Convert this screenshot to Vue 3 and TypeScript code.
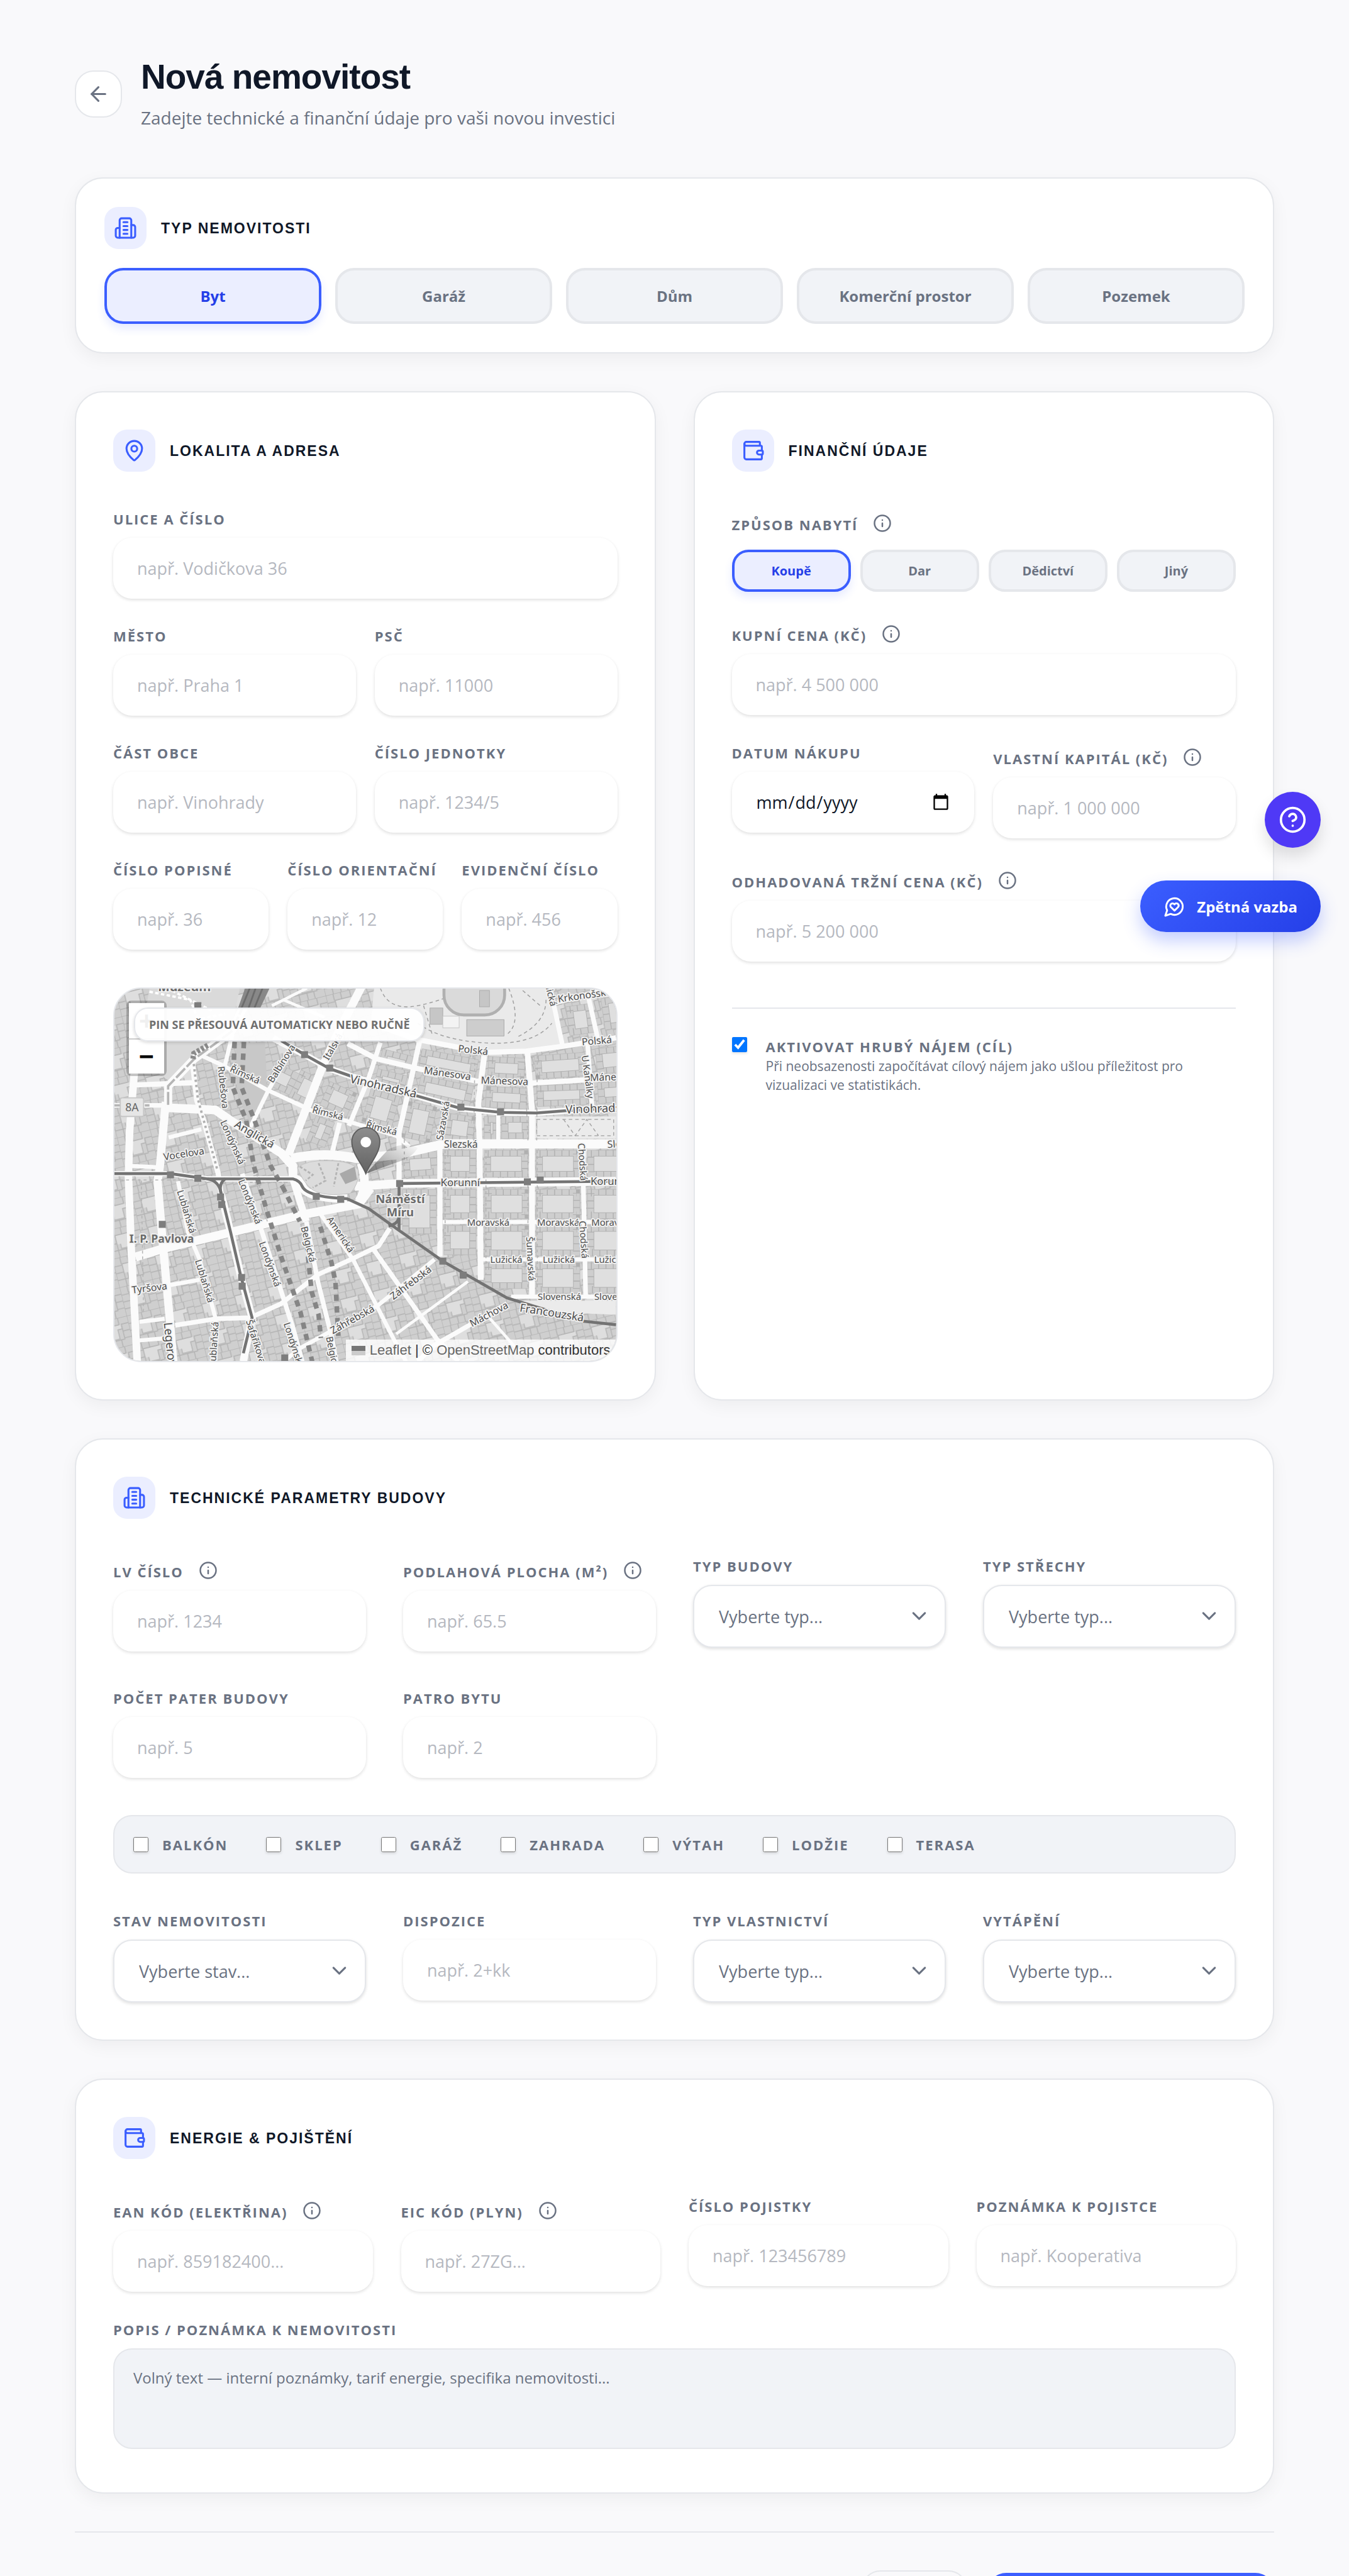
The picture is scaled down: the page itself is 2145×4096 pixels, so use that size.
<script setup lang="ts">
import { h, ref } from 'vue'

interface Field {
  id: string
  label: string
  hint?: string
  info?: boolean
  select?: boolean
}

const iconPaths: Record<string, string[]> = {
  back: ['m12 19-7-7 7-7', 'M19 12H5'],
  building: [
    'M6 22V4a2 2 0 0 1 2-2h8a2 2 0 0 1 2 2v18Z',
    'M6 12H4a2 2 0 0 0-2 2v6a2 2 0 0 0 2 2h2',
    'M18 9h2a2 2 0 0 1 2 2v9a2 2 0 0 1-2 2h-2',
    'M10 6h4',
    'M10 10h4',
    'M10 14h4',
    'M10 18h4',
  ],
  pin: [
    'M20 10c0 4.993-5.539 10.193-7.399 11.799a1 1 0 0 1-1.202 0C9.539 20.193 4 14.993 4 10a8 8 0 0 1 16 0',
    'M15 10a3 3 0 1 1-6 0a3 3 0 0 1 6 0',
  ],
  wallet: [
    'M19 7V4a1 1 0 0 0-1-1H5a2 2 0 0 0 0 4h15a1 1 0 0 1 1 1v4h-3a2 2 0 0 0 0 4h3a1 1 0 0 0 1-1v-2a1 1 0 0 0-1-1',
    'M3 5v14a2 2 0 0 0 2 2h15a1 1 0 0 0 1-1v-4',
  ],
  info: ['M22 12a10 10 0 1 1-20 0a10 10 0 0 1 20 0', 'M12 16v-4', 'M12 8h.01'],
  help: [
    'M22 12a10 10 0 1 1-20 0a10 10 0 0 1 20 0',
    'M9.09 9a3 3 0 0 1 5.83 1c0 2-3 3-3 3',
    'M12 17h.01',
  ],
  chevron: ['m6 9 6 6 6-6'],
  feedback: [
    'M7.9 20A9 9 0 1 0 4 16.1L2 22Z',
    'M15.8 9.2a2.5 2.5 0 0 0-3.5 0l-.3.4-.35-.3a2.42 2.42 0 1 0-3.2 3.6l3.6 3.5 3.6-3.5c1.2-1.2 1.1-2.7.2-3.7',
  ],
}

const Icon = (props: { name: string }) =>
  h(
    'svg',
    {
      viewBox: '0 0 24 24',
      fill: 'none',
      stroke: 'currentColor',
      'stroke-width': 2,
      'stroke-linecap': 'round',
      'stroke-linejoin': 'round',
      'aria-hidden': 'true',
    },
    iconPaths[props.name].map((d) => h('path', { d })),
  )
Icon.props = ['name']

const kinds = ['Byt', 'Garáž', 'Dům', 'Komerční prostor', 'Pozemek']
const kind = ref('Byt')
const acquisitions = ['Koupě', 'Dar', 'Dědictví', 'Jiný']
const acquisition = ref('Koupě')
const rentTarget = ref(true)

const addressRows: Field[][] = [
  [{ id: 'street', label: 'Ulice a číslo', hint: 'např. Vodičkova 36' }],
  [
    { id: 'city', label: 'Město', hint: 'např. Praha 1' },
    { id: 'zip', label: 'PSČ', hint: 'např. 11000' },
  ],
  [
    { id: 'district', label: 'Část obce', hint: 'např. Vinohrady' },
    { id: 'unit', label: 'Číslo jednotky', hint: 'např. 1234/5' },
  ],
  [
    { id: 'houseno', label: 'Číslo popisné', hint: 'např. 36' },
    { id: 'orientno', label: 'Číslo orientační', hint: 'např. 12' },
    { id: 'evidno', label: 'Evidenční číslo', hint: 'např. 456' },
  ],
]

const buildingFields: Field[] = [
  { id: 'lv', label: 'LV číslo', hint: 'např. 1234', info: true },
  { id: 'area', label: 'Podlahová plocha (m²)', hint: 'např. 65.5', info: true },
  { id: 'btype', label: 'Typ budovy', hint: 'Vyberte typ...', select: true },
  { id: 'roof', label: 'Typ střechy', hint: 'Vyberte typ...', select: true },
  { id: 'floors', label: 'Počet pater budovy', hint: 'např. 5' },
  { id: 'floor', label: 'Patro bytu', hint: 'např. 2' },
]
const amenities = ['Balkón', 'Sklep', 'Garáž', 'Zahrada', 'Výtah', 'Lodžie', 'Terasa']
const stateFields: Field[] = [
  { id: 'state', label: 'Stav nemovitosti', hint: 'Vyberte stav...', select: true },
  { id: 'layout', label: 'Dispozice', hint: 'např. 2+kk' },
  { id: 'ownership', label: 'Typ vlastnictví', hint: 'Vyberte typ...', select: true },
  { id: 'heating', label: 'Vytápění', hint: 'Vyberte typ...', select: true },
]
const energyFields: Field[] = [
  { id: 'ean', label: 'EAN kód (elektřina)', hint: 'např. 859182400...', info: true },
  { id: 'eic', label: 'EIC kód (plyn)', hint: 'např. 27ZG...', info: true },
  { id: 'policy', label: 'Číslo pojistky', hint: 'např. 123456789' },
  { id: 'policynote', label: 'Poznámka k pojistce', hint: 'např. Kooperativa' },
]

/* Map drawing: streets as [width, path] in map units */
const streets: [number, string][] = [
  [13, 'M36 120 26 244 24 322 29 452 39 640'],
  [14, 'M88 195 78 305 74 331 83 439 93 548 101 640'],
  [14, 'M92 205V168L136 122 200 75 240-5'],
  [9, 'M36 166 136 162'],
  [8, 'M0 201H88'],
  [15, 'M90 205 173 209 199 227 286 283 306 305 306 327'],
  [9, 'M133 120 141 192 153 227 178 318 183 353'],
  [13, 'M183 353 199 418 216 491 236 565 221 640'],
  [7, 'M146 114 189 134 263 175 336 209 416 233 483 253 506 272'],
  [7, 'M189 134 202 80'],
  [7, 'M233 238 263 177 306 101'],
  [14, 'M298 286 356 136 386 71 425-5'],
  [8, 'M374 279 386 231'],
  [8, 'M402 236 436 154 456 93'],
  [16, 'M303 292Q360 280 416 292L483 286 566 267H860'],
  [15, 'M423 300Q436 340 419 366'],
  [15, 'M36 461 86 446 186 422 319 389 419 370 439 343'],
  [15, 'M412 340 486 335 860 331'],
  [15, 'M306 327Q318 327 322 340 330 360 399 361 436 375L486 416 566 470 673 531 803 571 860 577'],
  [9, 'M0 318H96L159 327H306'],
  [11, 'M272 86 326 114 369 138 406 151 516 184 593 206 663 213 723 214 776 210 860 206'],
  [9, 'M440 60 519 88 593 102 639 110 706 108 773 99 860 85'],
  [9, 'M400 95 449 121 516 137 619 159 713 163 860 154'],
  [9, 'M523 92 488 248V333'],
  [10, 'M634 116 624 196 626 267 628 500'],
  [10, 'M708 109 716 210V530'],
  [9, 'M558 272V460'],
  [7, 'M658 218V262'],
  [8, 'M804 267V338L808 529'],
  [8, 'M752 22 768 97'],
  [8, 'M760 24 860-2'],
  [8, 'M812 12 829 88'],
  [8, 'M811 92 819 205'],
  [7, 'M563 401H860'],
  [7, 'M628 465H860'],
  [7, 'M680 529H860'],
  [8, 'M472 412 453 442 406 465 349 491 286 541 233 565 173 567 104 578'],
  [8, 'M443 446 553 602 590 640'],
  [7, 'M353 387 409 465 479 602 500 640'],
  [7, 'M549 465 453 543 406 569 319 617 290 640'],
  [8, 'M673 541 549 612 520 640'],
  [5, 'M606 503 483 593'],
  [5, 'M640 562 700 630'],
  [8, 'M219 318 253 418 306 582 322 640'],
  [12, 'M306 327 329 400'],
  [8, 'M329 400 349 504 373 600 380 640'],
  [7, 'M109 331 126 418 146 465 173 565V640'],
  [7, 'M93 256 149 242'],
  [7, 'M29 305 76 307'],
  [7, 'M96 509 146 500'],
  [7, 'M43 572 86 567'],
  [7, 'M43 604 90 600'],
  [5, 'M270 30 330 0'],
  [5, 'M290 20 360 50'],
]

const rails: string[] = [
  'M206 92 203 170 226 227 239 305 259 374 286 461 319 556 339 640',
  'M222 92 218 170 240 226 268 305 288 340',
  'M288 340 318 400',
  'M330 440 338 520 350 560 354 600',
  'M353 409 372 470 379 504 384 600',
]

const trams: string[] = [
  'M0 318H96L159 327H306Q318 330 322 340 330 358 399 361L436 378 486 414 566 470 673 531 803 571 860 577',
  'M159 327Q180 330 183 353L199 418 216 491 236 565 221 626',
  'M190 327Q178 335 183 353',
  'M286 90 326 114 369 138 406 151',
  'M516 184 593 206 663 213 723 214 776 210 860 206',
  'M488 335 860 331',
  'M488 335V414M470 408Q486 404 487 395',
]

const stops: [number, number][] = [
  [96, 320], [143, 326], [182, 358], [184, 371], [218, 496], [219, 511], [346, 357], [388, 362],
  [326, 114], [369, 137], [82, 405], [143, 30], [292, 634],
  [594, 204], [662, 212], [489, 335], [708, 332], [730, 329], [563, 468], [598, 492],
]

/* City blocks: x, y, width, height, rotation */
const blocks: [number, number, number, number, number][] = [
  [494, 284, 58, 40, -4], [565, 278, 55, 46, 0], [634, 278, 75, 46, 0], [723, 278, 75, 46, 0], [811, 278, 75, 46, 0],
  [494, 345, 58, 76, 0], [565, 345, 55, 50, 0], [635, 345, 75, 50, 0], [723, 345, 75, 50, 0], [811, 345, 75, 50, 0],
  [565, 407, 55, 50, 0], [635, 407, 75, 52, 0], [723, 407, 75, 52, 0], [811, 407, 75, 52, 0],
  [635, 471, 75, 44, 0], [723, 471, 75, 52, 0], [811, 471, 75, 52, 0],
  [528, 104, 98, 36, 11], [526, 149, 92, 38, 12], [642, 117, 62, 38, 3], [720, 116, 86, 40, -4], [824, 104, 70, 44, -6],
  [638, 168, 70, 36, 3], [724, 167, 84, 36, -2], [828, 162, 60, 36, -4],
  [504, 194, 50, 62, 12], [570, 214, 50, 46, 8], [634, 220, 20, 40, 0], [664, 220, 46, 38, 0],
  [460, 104, 54, 26, 14], [452, 138, 52, 26, 14], [440, 172, 52, 58, 16],
  [774, 32, 44, 50, -8], [834, 18, 50, 54, -8],
  [370, 160, 50, 44, 24], [320, 140, 44, 50, 26], [278, 128, 44, 40, 26], [346, 218, 34, 46, 22],
]

/* Street names: x, y, rotation, size, text */
const names: [number, number, number, number, string][] = [
  [187, 176, 84, 16, 'Rubešova'],
  [224, 154, 24, 16, 'Římská'],
  [286, 135, -58, 16, 'Balbínova'],
  [374, 106, -60, 16, 'Italská'],
  [366, 220, 14, 16, 'Římská'],
  [240, 257, 30, 19, 'Anglická'],
  [203, 270, 66, 16, 'Londýnská'],
  [233, 372, 68, 16, 'Londýnská'],
  [267, 479, 70, 16, 'Londýnská'],
  [308, 618, 72, 16, 'Londýnská'],
  [119, 290, -9, 17, 'Vocelova'],
  [124, 389, 73, 16, 'Lublaňská'],
  [155, 508, 73, 16, 'Lublaňská'],
  [170, 616, -86, 16, 'Lublaňská'],
  [60, 520, -7, 17, 'Tyršova'],
  [95, 622, 84, 20, 'Legerova'],
  [243, 612, 72, 16, 'Šafaříkova'],
  [333, 445, 76, 16, 'Belgická'],
  [375, 634, 78, 16, 'Belgická'],
  [388, 428, 56, 16, 'Americká'],
  [408, 574, -29, 17, 'Záhřebská'],
  [508, 511, -37, 17, 'Záhřebská'],
  [642, 565, -28, 17, 'Máchova'],
  [615, 112, 6, 17, 'Polská'],
  [827, 96, -5, 17, 'Polská'],
  [571, 152, 8, 17, 'Mánesova'],
  [669, 165, 2, 17, 'Mánesova'],
  [856, 158, -2, 17, 'Mánesova'],
  [461, 175, 13, 20, 'Vinohradská'],
  [832, 213, -2, 20, 'Vinohradská'],
  [458, 246, 14, 16, 'Římská'],
  [563, 233, -80, 16, 'Sázavská'],
  [594, 274, 0, 17, 'Slezská'],
  [874, 272, -4, 17, 'Slezská'],
  [593, 339, 0, 18, 'Korunní'],
  [850, 337, 0, 18, 'Korunní'],
  [641, 407, 0, 16, 'Moravská'],
  [761, 407, 0, 16, 'Moravská'],
  [854, 407, 0, 16, 'Moravská'],
  [672, 471, 0, 16, 'Lužická'],
  [762, 471, 0, 16, 'Lužická'],
  [850, 471, 0, 16, 'Lužická'],
  [763, 535, 0, 16, 'Slovenská'],
  [860, 535, 0, 16, 'Slovenská'],
  [714, 470, 87, 16, 'Šumavská'],
  [803, 304, 86, 16, 'Chodská'],
  [805, 437, 86, 16, 'Chodská'],
  [812, 158, 82, 16, 'U Kanálky'],
  [750, 563, 9, 19, 'Francouzská'],
  [806, 18, -8, 17, 'Krkonošská'],
  [746, 6, 76, 16, 'Blanická'],
]
</script>

<template>
  <div class="page">
    <header class="head">
      <button type="button" class="back" aria-label="Zpět"><Icon name="back" /></button>
      <div>
        <h1>Nová nemovitost</h1>
        <p>Zadejte technické a finanční údaje pro vaši novou investici</p>
      </div>
    </header>

    <form class="stack" @submit.prevent>
      <section class="card card-tight">
        <div class="card-head tight">
          <span class="badge"><Icon name="building" /></span>
          <h2>Typ nemovitosti</h2>
        </div>
        <div class="kinds">
          <button v-for="k in kinds" :key="k" type="button" class="choice" :class="{ on: k === kind }" @click="kind = k">
            {{ k }}
          </button>
        </div>
      </section>

      <div class="halves">
        <section class="card">
          <div class="card-head">
            <span class="badge"><Icon name="pin" /></span>
            <h2>Lokalita a adresa</h2>
          </div>
          <div class="rows">
            <div v-for="(row, i) in addressRows" :key="i" class="row">
              <div v-for="f in row" :key="f.id" class="field">
                <div class="cap"><label :for="f.id">{{ f.label }}</label></div>
                <input :id="f.id" type="text" class="input" :placeholder="f.hint" />
              </div>
            </div>
          </div>

          <div class="map">
            <svg class="tiles" viewBox="0 0 860 640" preserveAspectRatio="xMidYMid slice" aria-hidden="true">
              <defs>
                <pattern id="lots" width="58" height="50" patternUnits="userSpaceOnUse" patternTransform="rotate(-14)">
                  <rect width="58" height="50" fill="#cfcfcf" />
                  <path d="M14 12h30v8h-6v16H20v-8h-6z" fill="#dedede" />
                  <path
                    d="M0 0H58M0 0V50M13 0V12M26 0V12M42 0V12H14V38H46V12H58M0 14H14M0 26H14M0 38H14V50M28 38V50M40 38V50M46 24H58M46 36H58M20 28V36H38V20H46"
                    fill="none" stroke="#b2b2b2" stroke-width="1.5"
                  />
                </pattern>
                <linearGradient id="pinfill" x1="0" y1="0" x2="0" y2="1">
                  <stop offset="0" stop-color="#8e8e8e" />
                  <stop offset="1" stop-color="#626262" />
                </linearGradient>
                <linearGradient id="pinshade" x1="0" y1="1" x2="1" y2="0">
                  <stop offset="0" stop-color="#000" stop-opacity=".45" />
                  <stop offset="1" stop-color="#000" stop-opacity="0" />
                </linearGradient>
              </defs>
              <rect width="860" height="640" fill="url(#lots)" />

              <path d="M100 0H215L200 70 136 115 95 160 40 120 60 0Z" fill="#dadada" />
              <path d="M60 6 130 20 150 70M90 0 170 40M110 60 190 44" fill="none" stroke="#fff" stroke-width="4" stroke-dasharray="6 4" />
              <path d="M445 0H752L768 97 706 108 639 110 519 88 440 60Z" fill="#eaeaea" />
              <g fill="none" stroke="#a0a0a0" stroke-width="1.6" stroke-dasharray="6 5">
                <path d="M456 0Q470 40 520 30T600 0M520 60Q560 90 640 94T750 60M676 0Q700 60 672 80M740 20Q740 60 690 84M700 4 730 30M530 30 545 80" />
              </g>
              <rect x="565" y="-30" width="104" height="76" rx="34" fill="#dadada" stroke="#b0b0b0" stroke-width="5" />
              <rect x="626" y="4" width="17" height="28" fill="#c6c6c6" stroke="#aaa" />
              <rect x="604" y="54" width="64" height="28" fill="#cdcdcd" stroke="#a8a8a8" />
              <rect x="541" y="34" width="22" height="28" fill="#c6c6c6" stroke="#a8a8a8" />
              <rect x="563" y="48" width="28" height="20" fill="#f3f3f3" stroke="#c4c4c4" />
              <path d="M719 220H860V258H719Z" fill="#ebebeb" />
              <path d="M724 225H856V253H724ZM770 225 790 253 810 225 830 253" fill="none" stroke="#a0a0a0" stroke-width="1.5" stroke-dasharray="6 5" />
              <path d="M690 536H860V560L760 556Z" fill="#ebebeb" />
              <path d="M208 96 258 92 262 172 232 230 210 180Z" fill="#c8c8c8" />

              <g v-for="(b, i) in blocks" :key="'b' + i" :transform="`rotate(${b[4]} ${b[0]} ${b[1]})`">
                <rect :x="b[0]" :y="b[1]" :width="b[2]" :height="b[3]" fill="#cecece" stroke="#bdbdbd" />
                <rect
                  :x="b[0] + 6" :y="b[1] + 6" :width="b[2] - 12" :height="b[3] - 12"
                  fill="none" stroke="#b0b0b0" stroke-width="12" stroke-dasharray="1.5 11"
                />
                <rect :x="b[0] + 11" :y="b[1] + 10" :width="b[2] - 22 > 0 ? b[2] - 22 : 4" :height="b[3] - 20" fill="#dfdfdf" stroke="#b0b0b0" />
              </g>

              <g fill="none" stroke="#fbfbfb" stroke-linejoin="round">
                <path v-for="(s, i) in streets" :key="'s' + i" :d="s[1]" :stroke-width="s[0]" />
              </g>
              <g fill="none" stroke="#b4b4b4" stroke-width="1.6" stroke-dasharray="5 5">
                <path d="M0 329H178M212 333H300M618 118 616 262M703 116 709 262M725 116 724 262M567 278V440M637 278V490M725 278V520M709 278V520M497 250V330M46 330 50 560M244 318 262 400" />
              </g>
              <path d="M92 200V168L136 122 200 75 228 16M0 201H60" fill="none" stroke="#b5b5b5" stroke-width="4" stroke-dasharray="22 4" />
              <path d="M160 98 136 112 134 124" fill="none" stroke="#8a8a8a" stroke-width="9" stroke-dasharray="5 3" />
              <path d="M136 130 143 190 176 310" fill="none" stroke="#b0b0b0" stroke-width="4" stroke-dasharray="4 5" />
              <path d="M224 0H266L250 34H212Z" fill="#888" />
              <path d="M232 0 218 34M242 0 230 34M254 0 240 34" stroke="#6c6c6c" stroke-width="3" />
              <g fill="none" stroke="#858585" stroke-width="8" stroke-dasharray="11 9">
                <path v-for="(r, i) in rails" :key="'r' + i" :d="r" />
              </g>

              <path d="M314 308Q330 294 366 296 408 296 418 312 420 336 404 352 360 358 340 346 322 332 314 308Z" fill="#dcdcdc" stroke="#c0c0c0" />
              <path d="M318 306 340 320 328 330M350 300 362 330 340 342M384 300 376 340" fill="none" stroke="#b4b4b4" stroke-width="3" stroke-dasharray="5 3" />
              <path d="M386 318 412 306 416 328 396 336Z" fill="#a9a9a9" />

              <g fill="none" stroke="#737373" stroke-width="5" stroke-linejoin="round">
                <path v-for="(t, i) in trams" :key="'t' + i" :d="t" />
              </g>
              <rect v-for="(p, i) in stops" :key="'p' + i" :x="p[0] - 6" :y="p[1] - 6" width="12" height="12" fill="#7d7d7d" />

              <g class="names" text-anchor="middle">
                <text
                  v-for="(n, i) in names" :key="'n' + i" :x="n[0]" :y="n[1]" :font-size="n[3]"
                  :transform="`rotate(${n[2]} ${n[0]} ${n[1] - 6})`"
                >{{ n[4] }}</text>
                <text x="120" y="5" font-size="21" class="metro">Muzeum</text>
                <text x="81" y="437" font-size="19" class="metro">I. P. Pavlova</text>
                <text x="490" y="368" font-size="20" class="metro">Náměstí</text>
                <text x="490" y="391" font-size="20" class="metro">Míru</text>
              </g>
              <rect x="10" y="188" width="40" height="32" rx="3" fill="#e6e6e6" stroke="#c6c6c6" stroke-width="2" />
              <text x="30" y="211" font-size="19" text-anchor="middle" class="route">8A</text>

              <path d="M431 318 470 276Q500 262 520 274 510 292 480 300Z" fill="url(#pinshade)" />
              <path
                d="M431 318C424 300 407 284 407 263a24 24 0 0 1 48 0C455 284 438 300 431 318Z"
                fill="url(#pinfill)" stroke="#5c5c5c" stroke-width="2"
              />
              <circle cx="431" cy="264" r="9" fill="#fff" />
            </svg>
            <div class="zoom">
              <button type="button" aria-label="Přiblížit">+</button>
              <button type="button" aria-label="Oddálit">−</button>
            </div>
            <div class="tip">PIN SE PŘESOUVÁ AUTOMATICKY NEBO RUČNĚ</div>
            <div class="credit">
              <span class="flag"></span>
              <span><a href="#">Leaflet</a> | © <a href="#">OpenStreetMap</a> contributors</span>
            </div>
          </div>
        </section>

        <section class="card">
          <div class="card-head">
            <span class="badge"><Icon name="wallet" /></span>
            <h2>Finanční údaje</h2>
          </div>
          <div class="rows roomy">
            <div class="field">
              <div class="cap has-info wide">
                <span id="acq">Způsob nabytí</span>
                <button type="button" class="info" aria-label="Nápověda"><Icon name="info" /></button>
              </div>
              <div class="acq" role="group" aria-labelledby="acq">
                <button
                  v-for="a in acquisitions" :key="a" type="button" class="choice small"
                  :class="{ on: a === acquisition }" @click="acquisition = a"
                >{{ a }}</button>
              </div>
            </div>
            <div class="field">
              <div class="cap has-info">
                <label for="price">Kupní cena (Kč)</label>
                <button type="button" class="info" aria-label="Nápověda"><Icon name="info" /></button>
              </div>
              <input id="price" type="text" class="input" placeholder="např. 4 500 000" />
            </div>
            <div class="row">
              <div class="field">
                <div class="cap"><label for="date">Datum nákupu</label></div>
                <input id="date" type="date" class="input" />
              </div>
              <div class="field">
                <div class="cap has-info">
                  <label for="equity">Vlastní kapitál (Kč)</label>
                  <button type="button" class="info" aria-label="Nápověda"><Icon name="info" /></button>
                </div>
                <input id="equity" type="text" class="input" placeholder="např. 1 000 000" />
              </div>
            </div>
            <div class="field">
              <div class="cap has-info">
                <label for="market">Odhadovaná tržní cena (Kč)</label>
                <button type="button" class="info" aria-label="Nápověda"><Icon name="info" /></button>
              </div>
              <input id="market" type="text" class="input" placeholder="např. 5 200 000" />
            </div>
          </div>
          <div class="rent">
            <input id="rent" v-model="rentTarget" type="checkbox" class="tick" />
            <div>
              <label for="rent" class="rent-title">Aktivovat hrubý nájem (cíl)</label>
              <p>Při neobsazenosti započítávat cílový nájem jako ušlou příležitost pro vizualizaci ve statistikách.</p>
            </div>
          </div>
        </section>
      </div>

      <section class="card">
        <div class="card-head">
          <span class="badge"><Icon name="building" /></span>
          <h2>Technické parametry budovy</h2>
        </div>
        <div class="quarters">
          <div v-for="f in buildingFields" :key="f.id" class="field">
            <div class="cap" :class="{ 'has-info': f.info }">
              <label :for="f.id">{{ f.label }}</label>
              <button v-if="f.info" type="button" class="info" aria-label="Nápověda"><Icon name="info" /></button>
            </div>
            <div v-if="f.select" class="select">
              <select :id="f.id"><option>{{ f.hint }}</option></select>
              <Icon name="chevron" class="chevron" />
            </div>
            <input v-else :id="f.id" type="text" class="input" :placeholder="f.hint" />
          </div>
        </div>
        <div class="amenities">
          <label v-for="a in amenities" :key="a"><input type="checkbox" class="tick" />{{ a }}</label>
        </div>
        <div class="quarters">
          <div v-for="f in stateFields" :key="f.id" class="field">
            <div class="cap"><label :for="f.id">{{ f.label }}</label></div>
            <div v-if="f.select" class="select">
              <select :id="f.id"><option>{{ f.hint }}</option></select>
              <Icon name="chevron" class="chevron" />
            </div>
            <input v-else :id="f.id" type="text" class="input" :placeholder="f.hint" />
          </div>
        </div>
      </section>

      <section class="card">
        <div class="card-head">
          <span class="badge"><Icon name="wallet" /></span>
          <h2>Energie &amp; pojištění</h2>
        </div>
        <div class="rows roomy">
          <div class="quarters close">
            <div v-for="f in energyFields" :key="f.id" class="field">
              <div class="cap" :class="{ 'has-info': f.info }">
                <label :for="f.id">{{ f.label }}</label>
                <button v-if="f.info" type="button" class="info" aria-label="Nápověda"><Icon name="info" /></button>
              </div>
              <input :id="f.id" type="text" class="input" :placeholder="f.hint" />
            </div>
          </div>
          <div class="field">
            <div class="cap"><label for="note">Popis / poznámka k nemovitosti</label></div>
            <textarea id="note" placeholder="Volný text — interní poznámky, tarif energie, specifika nemovitosti..."></textarea>
          </div>
        </div>
      </section>

      <footer class="actions">
        <button type="button" class="cancel">Zrušit</button>
        <button type="submit" class="save">Uložit nemovitost</button>
      </footer>
    </form>

    <button type="button" class="fab-help" aria-label="Nápověda"><Icon name="help" /></button>
    <button type="button" class="fab-feedback"><Icon name="feedback" />Zpětná vazba</button>
  </div>
</template>

<style>
body {
  background: #f9f9fb;
}
</style>

<style scoped>
.page {
  position: relative;
  box-sizing: border-box;
  max-height: 100vh;
  overflow: hidden;
  padding: 89px 119px 0;
  background: #f9f9fb;
  color: #101828;
  font-family: 'Open Sans', 'Noto Sans', sans-serif;
  font-size: 28px;
}
.page *,
.page *::before {
  box-sizing: border-box;
}
button,
input,
select,
textarea {
  font-family: inherit;
  margin: 0;
}
button {
  cursor: pointer;
  padding: 0;
}
.head {
  display: flex;
  align-items: center;
  gap: 30px;
  margin-bottom: 72px;
}
.back {
  display: grid;
  place-items: center;
  width: 75px;
  height: 75px;
  border: 2px solid #e5e7eb;
  border-radius: 30px;
  background: #fff;
  color: #6a7282;
}
.back svg {
  width: 37px;
}
h1 {
  margin: 0;
  font: 700 55px/67px 'Liberation Sans', Arial, sans-serif;
  letter-spacing: -1px;
}
.head p {
  margin: 9px 0 0;
  line-height: 45px;
  color: #6a7282;
}
.stack {
  display: flex;
  flex-direction: column;
  gap: 60px;
}
.card {
  padding: 59px;
  border: 2px solid #e5e7eb;
  border-radius: 45px;
  background: #fff;
  box-shadow: 0 8px 28px rgb(0 0 0 / 5%);
}
.card-tight {
  padding: 45px;
}
.card-head {
  display: flex;
  align-items: center;
  gap: 23px;
  margin-bottom: 60px;
}
.card-head.tight {
  margin-bottom: 30px;
}
.badge {
  display: grid;
  place-items: center;
  width: 67px;
  height: 67px;
  border-radius: 22px;
  background: #ebeeff;
  color: #3b5eff;
}
.badge svg {
  width: 37px;
}
h2 {
  margin: 0;
  font: 700 23px/30px 'Liberation Sans', Arial, sans-serif;
  letter-spacing: 2px;
  text-transform: uppercase;
}
.kinds {
  display: grid;
  grid-template-columns: repeat(5, 1fr);
  gap: 22px;
}
.choice {
  height: 89px;
  border: 4px solid #e5e7eb;
  border-radius: 30px;
  background: #f1f3f7;
  color: #6a7282;
  font-size: 24px;
  font-weight: 700;
}
.choice.small {
  height: 67px;
  border-radius: 26px;
  font-size: 20px;
}
.choice.on {
  border-color: #3b5eff;
  background: #ebeeff;
  color: #253fe8;
  box-shadow: 0 8px 14px rgb(59 94 255 / 12%);
}
.halves {
  display: grid;
  grid-template-columns: 1fr 1fr;
  gap: 60px;
}
.rows {
  display: flex;
  flex-direction: column;
  gap: 44px;
}
.rows.roomy {
  gap: 45px;
}
.row {
  display: grid;
  grid-auto-flow: column;
  grid-auto-columns: 1fr;
  gap: 30px;
}
.quarters {
  display: grid;
  grid-template-columns: repeat(4, 1fr);
  gap: 59px;
}
.quarters.close {
  gap: 45px;
}
.cap {
  display: flex;
  align-items: center;
  gap: 24px;
  height: 30px;
  margin-bottom: 15px;
  color: #6a7282;
  font-size: 22px;
  line-height: 30px;
  font-weight: 700;
  letter-spacing: 2px;
  text-transform: uppercase;
  white-space: nowrap;
}
.cap.has-info {
  margin-top: 9px;
}
.cap.wide {
  margin-bottom: 25px;
}
.info {
  height: 30px;
  margin-bottom: 5px;
  border: 0;
  background: none;
  color: #6a7282;
}
.info svg {
  display: block;
  width: 30px;
}
.acq {
  display: grid;
  grid-template-columns: repeat(4, 1fr);
  gap: 15px;
}
.input {
  display: block;
  width: 100%;
  height: 97px;
  padding: 0 38px;
  border: 0;
  border-radius: 30px;
  background: #fff;
  color: #101828;
  font-size: 27px;
  box-shadow: 0 2px 5px rgb(0 0 0 / 13%);
}
.input::placeholder {
  color: #b5b8c0;
  opacity: 1;
}
.input::-webkit-calendar-picker-indicator {
  width: 30px;
  height: 30px;
  padding: 0;
}
.select {
  position: relative;
}
select {
  display: block;
  appearance: none;
  width: 100%;
  height: 100px;
  padding: 0 60px 0 39px;
  border: 2px solid #e5e7eb;
  border-radius: 30px;
  background: #fff;
  color: #6a7282;
  font-size: 27px;
  box-shadow: 0 2px 5px rgb(0 0 0 / 13%);
}
.chevron {
  position: absolute;
  top: 31px;
  right: 24px;
  width: 37px;
  color: #6a7282;
  pointer-events: none;
}
.map {
  position: relative;
  overflow: hidden;
  height: 596px;
  margin-top: 60px;
  border: 2px solid #e5e7eb;
  border-radius: 45px;
  background: #d5d5d5;
}
.tiles {
  display: block;
  width: 100%;
  height: 100%;
}
.names text {
  fill: #4c4c4c;
  stroke: #f2f2f2;
  stroke-width: 4px;
  stroke-linejoin: round;
  paint-order: stroke;
  font-family: 'Noto Sans', sans-serif;
}
.names .metro {
  fill: #6b6b6b;
  font-weight: 700;
}
.route {
  fill: #666;
  font-family: 'Noto Sans', sans-serif;
}
.zoom {
  position: absolute;
  top: 19px;
  left: 19px;
  border: 4px solid rgb(0 0 0 / 22%);
  border-radius: 8px;
  background-clip: padding-box;
}
.zoom button {
  display: block;
  width: 56px;
  height: 56px;
  border: 0;
  background: #fff;
  color: #000;
  font: 700 41px/52px 'Liberation Sans', Arial, sans-serif;
}
.zoom button + button {
  border-top: 2px solid #ccc;
}
.tip {
  position: absolute;
  top: 30px;
  left: 31px;
  padding: 0 21px 0 22px;
  border: 2px solid #e5e7eb;
  border-radius: 22px;
  background: rgb(255 255 255 / 94%);
  color: #6f6f6f;
  font-size: 18px;
  line-height: 50px;
  font-weight: 700;
  white-space: nowrap;
  box-shadow: 0 2px 5px rgb(0 0 0 / 15%);
}
.credit {
  position: absolute;
  right: 0;
  bottom: 0;
  display: flex;
  align-items: center;
  gap: 7px;
  padding: 0 9px;
  background: rgb(255 255 255 / 80%);
  color: #333;
  font: 22px/34px 'Liberation Sans', Arial, sans-serif;
}
.credit a {
  color: #666;
  text-decoration: none;
}
.flag {
  width: 22px;
  height: 15px;
  border-top: 8px solid #757575;
  background: #ccc;
}
.rent {
  display: flex;
  gap: 30px;
  margin-top: 73px;
  padding-top: 45px;
  border-top: 2px solid #e5e7eb;
}
.tick {
  flex: none;
  width: 24px;
  height: 24px;
  border-radius: 4px;
  box-shadow: 0 2px 4px rgb(0 0 0 / 12%);
}
.rent-title {
  display: block;
  color: #6a7282;
  font-size: 22px;
  line-height: 30px;
  font-weight: 700;
  letter-spacing: 2px;
  text-transform: uppercase;
}
.rent p {
  margin: 1px 0 0;
  color: #6a7282;
  font-size: 21px;
  line-height: 30px;
}
.amenities {
  display: flex;
  align-items: center;
  gap: 61px;
  height: 93px;
  margin: 59px 0 60px;
  padding: 0 30px;
  border: 2px solid #e5e7eb;
  border-radius: 30px;
  background: #f1f3f7;
}
.amenities label {
  display: flex;
  align-items: center;
  gap: 22px;
  color: #6a7282;
  font-size: 22px;
  font-weight: 700;
  letter-spacing: 2px;
  text-transform: uppercase;
}
textarea {
  display: block;
  width: 100%;
  height: 160px;
  margin-bottom: 10px;
  padding: 28px 30px;
  border: 2px solid #e5e7eb;
  border-radius: 30px;
  background: #f1f3f7;
  color: #101828;
  font-size: 24px;
  line-height: 34px;
}
textarea::placeholder {
  color: #6a7282;
}
textarea::-webkit-scrollbar {
  width: 26px;
  height: 26px;
}
textarea::-webkit-resizer {
  background: url("data:image/svg+xml,%3Csvg xmlns='http://www.w3.org/2000/svg' viewBox='0 0 26 26'%3E%3Cpath d='M8 23 23 8M16 23l7-7' stroke='%23555' stroke-width='1.6'/%3E%3C/svg%3E") no-repeat 0 0 / 26px 26px;
}
.actions {
  display: flex;
  justify-content: flex-end;
  align-items: center;
  gap: 32px;
  padding: 60px 0;
  border-top: 2px solid #e5e7eb;
}
.cancel {
  width: 168px;
  height: 97px;
  border: 2px solid #e5e7eb;
  border-radius: 30px;
  background: #f9f9fb;
  color: #6a7282;
  font-size: 24px;
  font-weight: 700;
}
.save {
  width: 456px;
  height: 89px;
  border: 0;
  border-radius: 30px;
  background: #3b5eff;
  color: #fff;
  font-size: 24px;
  font-weight: 700;
}
.fab-help,
.fab-feedback {
  position: absolute;
  right: 45px;
  border: 0;
  color: #fff;
}
.fab-help {
  top: 1259px;
  display: grid;
  place-items: center;
  width: 89px;
  height: 89px;
  border-radius: 50%;
  background: #4f39f6;
  box-shadow: 0 14px 24px rgb(0 0 0 / 12%);
}
.fab-help svg {
  width: 45px;
}
.fab-feedback {
  top: 1400px;
  display: flex;
  align-items: center;
  gap: 18px;
  height: 82px;
  padding: 0 37px;
  border-radius: 41px;
  background: linear-gradient(135deg, #3b5eff, #253fe8);
  font-size: 24px;
  font-weight: 700;
  box-shadow: 0 14px 28px rgb(59 94 255 / 30%);
}
.fab-feedback svg {
  width: 35px;
}
</style>
